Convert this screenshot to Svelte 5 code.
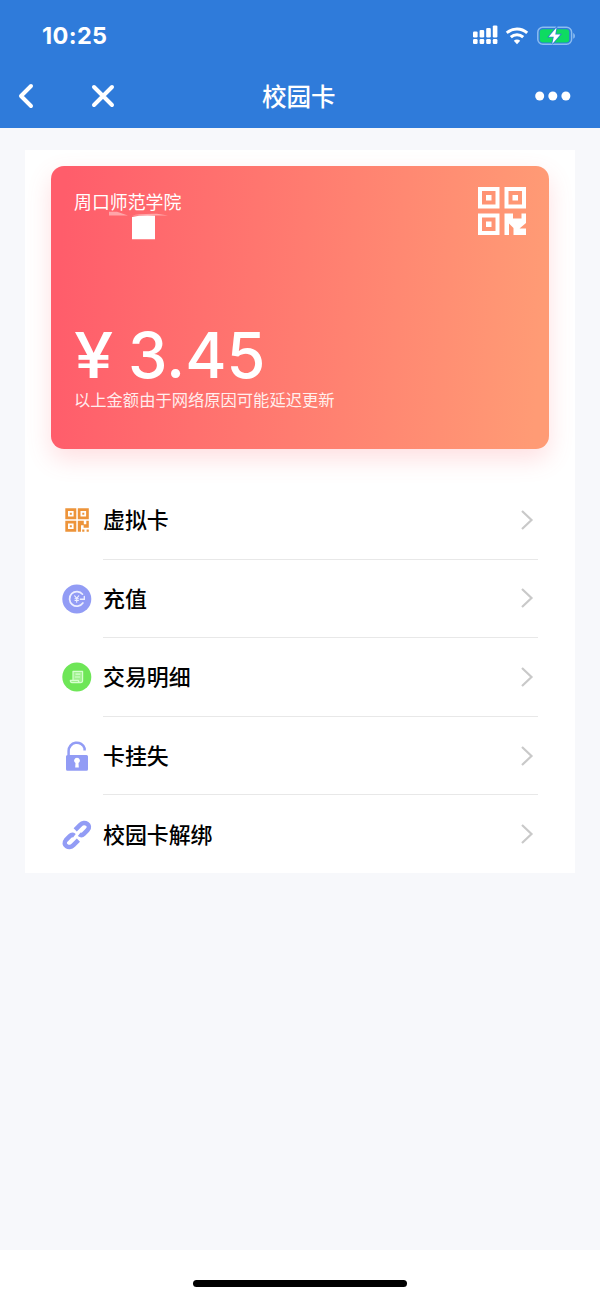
<script>
  const items = [
    { icon: 'qr', label: '虚拟卡' },
    { icon: 'topup', label: '充值' },
    { icon: 'bill', label: '交易明细' },
    { icon: 'lock', label: '卡挂失' },
    { icon: 'link', label: '校园卡解绑' }
  ];
  const bars = [
    { x: 0, h: 6 },
    { x: 6.6, h: 7.5 },
    { x: 13.2, h: 9.5 },
    { x: 19.8, h: 12 }
  ];
</script>

<div class="screen">
  <header>
    <div class="status">
      <span class="time">10:25</span>
      <div class="signals">
        <svg class="cell" width="25" height="20" viewBox="0 0 25 20">
          {#each bars as b}
            <rect x={b.x} y={12.4 - b.h} width="4.6" height={b.h} rx="1.2" />
            <rect x={b.x} y="14" width="4.6" height="5" rx="1.2" />
          {/each}
        </svg>
        <svg class="wifi" width="24" height="19" viewBox="0 0 24 19">
          <path d="M1.800 6.800C7.600 1.600 16.400 1.600 22.200 6.800" />
          <path d="M5.800 11.200c3.600-3.300 8.800-3.300 12.400 0" />
          <path class="dot" d="M8.800 14.800c1.900-1.700 4.500-1.700 6.400 0L12 18.200z" />
        </svg>
        <svg class="battery" width="39" height="20" viewBox="0 0 39 20">
          <rect x=".8" y="1.300" width="33.800" height="17" rx="5" fill="none" stroke="#8bbcf0" stroke-width="1.500" />
          <path d="M36.200 7v5.800c2.300-.8 2.300-5 0-5.800z" fill="#8bbcf0" />
          <rect x="2.800" y="3.200" width="29.400" height="13.300" rx="3" fill="#0edb61" />
          <path d="M19.500 1.500 11.800 10.800h5L15.200 18l8.200-9.600h-5.100z" fill="#fff" stroke="#2f7bda" stroke-width="1.500" paint-order="stroke" />
        </svg>
      </div>
    </div>
    <nav>
      <svg class="back" width="20" height="28" viewBox="0 0 20 28"><path d="M15 4 5 14 15 24" /></svg>
      <svg class="close" width="26" height="26" viewBox="0 0 26 26"><path d="M4 4l18 18M22 4 4 22" /></svg>
      <h1>校园卡</h1>
      <svg class="more" width="36" height="10" viewBox="0 0 36 10">
        <circle cx="4.700" cy="5" r="4.500" /><circle cx="17.800" cy="5" r="4.500" /><circle cx="30.900" cy="5" r="4.500" />
      </svg>
    </nav>
  </header>

  <main>
    <section class="panel">
      <div class="card">
        <div class="top">
          <div class="owner">
            <span class="school">周口师范学院</span>
            <svg class="mask" width="62" height="30" viewBox="0 0 62 30">
              <path d="M0 .8h8L19 4.500H0zM23 4.600Q30 2.500 48 2.800L59 4.600z" fill="#fff" opacity=".42" />
              <path d="M23 6Q32 4 46 4.800V28.300H23z" fill="#fff" />
            </svg>
          </div>
          <svg width="50" height="50" viewBox="0 0 50 50" fill="#fff">
            <path fill-rule="evenodd" d="M1 1h21.500v21.500H1zM5 5v13.500h13.500V5zM27.500 1H49v21.500H27.500zM31.500 5v13.500H45V5zM1 27.500h21.500V49H1zM5 31.500V45h13.500V31.500z" />
            <path d="M9 9h5.500v5.500H9zM35.500 9H41v5.500h-5.500zM9 35.500h5.500V41H9z" />
            <path d="M27.500 27.500H36V32.500H44.500V27.500H49V37L42.500 42.500H49V49H36.500V42L32 37.500V49H27.500z" />
          </svg>
        </div>
        <div class="amount"><span class="yen">¥</span><span>3.45</span></div>
        <p>以上金额由于网络原因可能延迟更新</p>
      </div>

      <ul>
        {#each items as item}
          <li>
            <svg class="icon" width="30" height="30" viewBox="0 0 30 30">
              {#if item.icon === 'qr'}
                <g fill="#ed943a">
                  <path fill-rule="evenodd" d="M3.300 3.300h11v11h-11zM6 6v5.600h5.600V6zM15.800 3.300h11v11h-11zM18.500 6v5.600h5.600V6zM3.300 15.800h11v11h-11zM6 18.500v5.600h5.600v-5.600z" />
                  <path d="M7.800 7.800H9.800V9.800H7.800zM20.300 7.800h2v2h-2zM7.800 20.300h2v2h-2zM15.800 15.800h6v3.500h2.500v-3.500h2.500v7h-5.200v-2.500h-2.600v6.500h-3.200zM20.200 24.600h2.200v2.200h-2.200zM24.600 24.600h2.200v2.200h-2.200z" />
                </g>
              {:else if item.icon === 'topup'}
                <circle cx="14.800" cy="15" r="14.500" fill="#929cf5" />
                <g fill="none" stroke="#eceeff" stroke-linecap="round">
                  <path d="M20.500 10.200A7.300 7.300 0 1 0 20.900 19" stroke-width="1.700" />
                  <path d="M22.300 12.400v2.800h-4" stroke-width="1.400" />
                  <path d="m12.700 11.800 2 2.600 2-2.600M14.700 14.400v3.900M13 14.800h3.400M13 16.500h3.400" stroke-width="1.100" />
                </g>
              {:else if item.icon === 'bill'}
                <circle cx="14.800" cy="15" r="14.500" fill="#6ee657" />
                <g fill="none" stroke="#d6ffcf" stroke-width="1.200" stroke-linejoin="round">
                  <path d="M11 17.800V9.300h9.600v9.500q0 1.800-2 1.800H10q-1.700 0-1.700-2.300h8q0 2.300 1.800 2.300" fill="#a1f091" />
                  <path d="M13.500 12.200h4.800M12.800 15h5.300" />
                </g>
              {:else if item.icon === 'lock'}
                <path d="M6.600 14V10a8.200 8.200 0 0 1 16-2.600v2" fill="none" stroke="#929cf5" stroke-width="2.500" />
                <path fill-rule="evenodd" fill="#929cf5" d="M5.500 14h19a1.500 1.500 0 0 1 1.500 1.500v12.800a1.500 1.500 0 0 1-1.500 1.500h-19A1.500 1.500 0 0 1 4 28.300V15.500A1.500 1.500 0 0 1 5.500 14zM15 16.800a2.800 2.800 0 0 0-1.500 5.200l-.3 4.600h3.600l-.3-4.600a2.800 2.800 0 0 0-1.500-5.200z" />
              {:else}
                <g fill="none" stroke="#929cf5" stroke-width="4.500">
                  <path d="M13.200 9.800 18.200 4.800C22.600.4 29.800 5.100 25.700 9.900L21.800 13.900C20.300 15.400 18.500 15.300 17.200 14.300" />
                  <path d="M16.400 20.200 11.400 25.200C7 29.600-.2 24.900 3.900 20.100L7.800 16.100C9.300 14.600 11.100 14.700 12.400 15.700" />
                </g>
              {/if}
            </svg>
            <div class="cellrow">
              <span class="label">{item.label}</span>
              <svg class="chevron" width="14" height="22" viewBox="0 0 14 22"><path d="m2 2 9.500 9L2 20" /></svg>
            </div>
          </li>
        {/each}
      </ul>
    </section>
  </main>

  <footer><div class="home"></div></footer>
</div>

<style>
  :global(body) { margin: 0; background: #fff; }
  .screen {
    box-sizing: border-box;
    width: 600px;
    height: 1299px;
    display: flex;
    flex-direction: column;
    overflow: hidden;
    background: #f7f8fb;
    color: #000;
    font-family: "Noto Sans CJK SC", sans-serif;
  }
  header { height: 127.500px; flex: none; background: #2f7bda; color: #fff; }
  .status {
    height: 64px;
    box-sizing: border-box;
    padding: 7px 24px 0 42px;
    display: flex;
    align-items: center;
    justify-content: space-between;
  }
  .time { font: 700 23.500px/28px Inter, sans-serif; letter-spacing: .35px; padding-top: 1px; }
  .signals { display: flex; align-items: center; }
  .cell { fill: #fff; margin: -1px 7px 0 0; }
  .wifi { fill: none; stroke: #fff; stroke-width: 3; margin-right: 8px; }
  .wifi .dot { fill: #fff; stroke: none; }
  nav { height: 63px; display: flex; align-items: center; padding: 0 29px 0 16px; }
  .back, .close { fill: none; stroke: #fff; stroke-width: 4; stroke-linecap: round; stroke-linejoin: round; }
  .close { margin-left: 54px; }
  h1 { flex: 1; margin: 0 0 0 146px; font-size: 24.500px; line-height: 36px; font-weight: 500; }
  .more { fill: #fff; }
  main { flex: 1; padding: 22.500px 25px 0; }
  .panel { box-sizing: border-box; height: 723px; padding: 16px 26px 0; background: #fff; }
  .card {
    box-sizing: border-box;
    width: 497.500px;
    height: 283px;
    padding: 20px 21.500px 0 23px;
    border-radius: 13px;
    background: linear-gradient(94deg, #ff5d6b 3%, #ff9b75 97%);
    box-shadow: 0 10px 24px rgba(255, 93, 107, .2);
    color: #fff;
  }
  .top { display: flex; justify-content: space-between; height: 130px; }
  .owner { display: flex; flex-direction: column; }
  .school { font-size: 17.900px; line-height: 30px; height: 25px; }
  .mask { margin-left: 35px; }
  .amount { display: flex; height: 72px; padding-top: 6px; box-sizing: border-box; align-items: center; font: 500 63px/54px Inter, sans-serif; }
  .amount span { height: 54px; }
  .yen { display: inline-block; width: 54px; transform: scaleX(1.120); transform-origin: left; }
  p { margin: 0; font-size: 16.300px; line-height: 23px; opacity: .88; white-space: nowrap; }
  ul { list-style: none; margin: 32px 11px 0 11px; padding: 0; }
  li { display: flex; height: 78.600px; align-items: center; }
  .icon { flex: none; margin-right: 11px; }
  .cellrow {
    box-sizing: border-box;
    flex: 1;
    height: 100%;
    display: flex;
    align-items: center;
    justify-content: space-between;
    padding-right: 4px;
    border-bottom: 1px solid #e8e8e8;
    font-size: 21.900px;
    font-weight: 500;
  }
  .label { padding-bottom: 2px; }
  li:last-child .cellrow { border-color: transparent; }
  .chevron { fill: none; stroke: #c9c9c9; stroke-width: 2.200; }
  footer { display: flex; flex: none; height: 49px; background: #fff; }
  .home { width: 214px; height: 7px; margin: 30px auto 0; border-radius: 4px; background: #000; }
</style>
